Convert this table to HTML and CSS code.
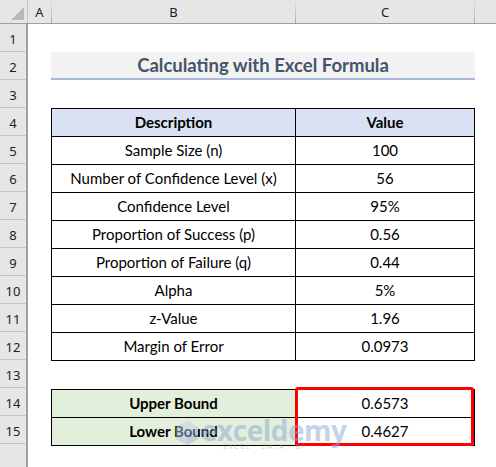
FILE: index.html
```html
<!DOCTYPE html>
<html lang="en">
<head>
    <meta charset="UTF-8">
    <meta name="viewport" content="width=device-width, initial-scale=1.0">
    <title>Calculating with Excel Formula</title>
    <link rel="stylesheet" href="styles.css">
</head>
<body>
    <div class="col-heads">
        <div class="corner"><span class="corner-tri"></span></div>
        <div class="col-head col-a">A</div>
        <div class="col-head col-b">B</div>
        <div class="col-head col-c">C</div>
        <div class="col-head col-d"></div>
    </div>

    <div class="sheet">
        <div class="row-heads">
            <div class="row-head">1</div>
            <div class="row-head">2</div>
            <div class="row-head">3</div>
            <div class="row-head">4</div>
            <div class="row-head">5</div>
            <div class="row-head">6</div>
            <div class="row-head">7</div>
            <div class="row-head">8</div>
            <div class="row-head">9</div>
            <div class="row-head">10</div>
            <div class="row-head">11</div>
            <div class="row-head">12</div>
            <div class="row-head">13</div>
            <div class="row-head">14</div>
            <div class="row-head">15</div>
            <div class="row-head empty"></div>
        </div>

        <div class="cells">
            <div class="blank-row"></div>
            <div class="title">Calculating with Excel Formula</div>
            <div class="blank-row"></div>

            <table class="data">
                <tr class="head">
                    <th>Description</th>
                    <th>Value</th>
                </tr>
                <tr><td>Sample Size (n)</td><td>100</td></tr>
                <tr><td>Number of Confidence Level (x)</td><td>56</td></tr>
                <tr><td>Confidence Level</td><td>95%</td></tr>
                <tr><td>Proportion of Success (p)</td><td>0.56</td></tr>
                <tr><td>Proportion of Failure (q)</td><td>0.44</td></tr>
                <tr><td>Alpha</td><td>5%</td></tr>
                <tr><td>z-Value</td><td>1.96</td></tr>
                <tr><td>Margin of Error</td><td>0.0973</td></tr>
            </table>

            <div class="blank-row"></div>

            <div class="bounds-wrap">
                <table class="data bounds">
                    <tr><th>Upper Bound</th><td>0.6573</td></tr>
                    <tr><th>Lower Bound</th><td>0.4627</td></tr>
                </table>
                <div class="highlight"></div>
                <div class="watermark">
                    <svg class="wm-icon" width="24" height="26" viewBox="0 0 24 26">
                        <path d="M12 1 L23 7 L23 19 L12 25 L1 19 L1 7 Z" fill="#9fb3dc"/>
                        <path d="M12 1 L23 7 L12 13 L1 7 Z" fill="#c3d0ea"/>
                        <path d="M12 13 L12 25 L1 19 L1 7 Z" fill="#b1c2e3"/>
                    </svg>
                    <div class="wm-text">
                        <span class="wm-name">exceldemy</span>
                        <span class="wm-tag">EXCEL · DATA · BI</span>
                    </div>
                </div>
            </div>
        </div>
    </div>
</body>
</html>
```

FILE: styles.css
```css
html, body {
    margin: 0;
    padding: 0;
}
body {
    width: 496px;
    height: 467px;
    overflow: hidden;
    background-color: #ffffff;
    font-family: Lato, "Open Sans", sans-serif;
    color: #000;
}
.col-heads {
    display: flex;
    height: 24px;
    background-color: #e6e6e6;
    border-bottom: 1px solid #9e9e9e;
    box-sizing: border-box;
}
.corner {
    width: 28px;
    position: relative;
    border-right: 1px solid #c4c4c4;
    box-sizing: border-box;
}
.corner-tri {
    position: absolute;
    right: 3px;
    bottom: 3px;
    width: 0;
    height: 0;
    border-left: 13px solid transparent;
    border-bottom: 13px solid #b9b9b9;
}
.col-head {
    box-sizing: border-box;
    text-align: center;
    font-family: "Noto Sans", sans-serif;
    font-size: 13px;
    line-height: 24px;
    color: #222;
    border-right: 1px solid #b8b8b8;
    border-image: linear-gradient(#e6e6e6, #a8a8a8) 1;
}
.col-a { width: 24px; }
.col-b { width: 244px; }
.col-c { width: 179px; }
.col-d { flex: 1; border: none; }

.sheet {
    display: flex;
}
.row-heads {
    width: 28px;
    background-color: #e6e6e6;
    border-right: 2px solid #a0a0a0;
    box-sizing: border-box;
}
.row-head {
    height: 28px;
    box-sizing: border-box;
    border-bottom: 1px solid #c6c6c6;
    text-align: center;
    font-family: "Noto Sans", sans-serif;
    font-size: 13px;
    line-height: 30px;
    color: #222;
}
.row-head.empty {
    height: 40px;
    border-bottom: none;
}
.cells {
    padding-left: 23px;
    width: 424px;
}
.blank-row {
    height: 28px;
}
.title {
    height: 28px;
    box-sizing: border-box;
    background-color: #f2f2f2;
    border-bottom: 2px solid #a9b9dc;
    text-align: center;
    font-weight: bold;
    font-size: 18.5px;
    line-height: 27px;
    color: #44546a;
}

.data {
    border-collapse: collapse;
    width: 424px;
    table-layout: fixed;
    font-size: 15px;
}
.data td, .data th {
    height: 27px;
    padding: 0;
    border: 1px solid #000;
    text-align: center;
    line-height: 27px;
}
.data td:first-child, .data th:first-child {
    width: 243px;
}
.data .head th {
    background-color: #d9e1f2;
}
.bounds th {
    background-color: #e2efda;
}

.bounds-wrap {
    position: relative;
}
.highlight {
    position: absolute;
    left: 244px;
    top: -2px;
    width: 179px;
    height: 59px;
    box-sizing: border-box;
    border: 3px solid #ff0000;
    border-radius: 3px;
}
.watermark {
    position: absolute;
    left: 124px;
    top: 30px;
    display: flex;
    align-items: flex-start;
    gap: 2px;
    opacity: 0.5;
    pointer-events: none;
}
.wm-icon {
    margin-top: 1px;
}
.wm-text {
    display: flex;
    flex-direction: column;
    line-height: 1;
}
.wm-name {
    font-family: "Open Sans", sans-serif;
    font-weight: bold;
    font-size: 28px;
    line-height: 22px;
    color: #8ea6d6;
    letter-spacing: -0.5px;
}
.wm-tag {
    font-family: "Open Sans", sans-serif;
    font-size: 7px;
    letter-spacing: 1.6px;
    color: #9aa3b5;
    margin-left: 22px;
    margin-top: 2px;
}
```
